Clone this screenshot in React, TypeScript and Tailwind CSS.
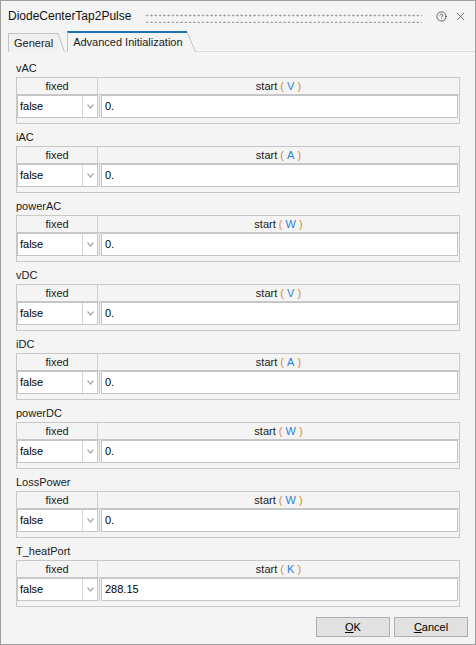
import React from 'react';
import { CircleHelp, X } from 'lucide-react';

interface Param {
  name: string;
  unit: string;
  value: string;
}

const params: Param[] = [
  { name: 'vAC', unit: 'V', value: '0.' },
  { name: 'iAC', unit: 'A', value: '0.' },
  { name: 'powerAC', unit: 'W', value: '0.' },
  { name: 'vDC', unit: 'V', value: '0.' },
  { name: 'iDC', unit: 'A', value: '0.' },
  { name: 'powerDC', unit: 'W', value: '0.' },
  { name: 'LossPower', unit: 'W', value: '0.' },
  { name: 'T_heatPort', unit: 'K', value: '288.15' },
];

const font = "font-['Liberation_Sans',Arial,sans-serif]";

const Chevron = () => (
  <svg width="7" height="5" viewBox="0 0 7 5" className="text-[#a8a8a8]">
    <path d="M0.5 0.5 L3.5 4 L6.5 0.5" fill="none" stroke="currentColor" strokeWidth="1.2" />
  </svg>
);

const ParamSection: React.FC<{ param: Param }> = ({ param }) => (
  <div className="h-[69px] flex flex-col">
    <div className="h-[18px] flex items-center text-[11px] text-[#1a1a1a] leading-none">{param.name}</div>
    <div className="h-[47px] border border-[#c8c8c8] flex flex-col">
      <div className="h-[17px] flex border-b border-[#c8c8c8] text-[11px] text-[#1a1a1a]">
        <div className="w-[81px] flex items-center justify-center border-r border-[#d0d0d0]">fixed</div>
        <div className="flex-1 flex items-center justify-center">
          start&nbsp;<span className="text-[#e08a1e]">(</span>
          <span className="text-[#2a7fd4]">&nbsp;{param.unit}&nbsp;</span>
          <span className="text-[#e08a1e]">)</span>
        </div>
      </div>
      <div className="h-[23px] flex pr-[1px]">
        <div className="w-[81px] flex border border-[#c4c4c4] bg-white">
          <div className="flex-1 flex items-center pl-[2px] text-[11px] text-black">false</div>
          <div className="w-[15px] border-l border-[#d4d4d4] flex items-center justify-center">
            <Chevron />
          </div>
        </div>
        <div className="w-[1px] bg-[#c8c8c8] mx-[1px]" />
        <div className="flex-1 border border-[#c4c4c4] bg-white flex items-center pl-[3px] text-[11px] text-black">
          {param.value}
        </div>
      </div>
    </div>
  </div>
);

export default function App() {
  return (
    <div className={`${font} w-[476px] h-[645px] bg-[#f4f4f4] border border-[#a0a0a0] flex flex-col select-none`}>
      <div className="h-[30px] flex items-center pl-[7px] pr-[8px]">
        <span className="text-[12px] text-[#111] whitespace-nowrap">DiodeCenterTap2Pulse</span>
        <div className="flex-1 mx-[14px] h-[11px] mt-[3px] bg-[radial-gradient(circle,#a0a0a0_0.9px,transparent_1.1px)] bg-[length:4.3px_7px]" />
        <CircleHelp size={11} strokeWidth={1.6} className="text-[#333] mr-[7px]" />
        <X size={13} strokeWidth={1.2} className="text-[#333]" />
      </div>
      <div className="h-[21px] flex items-end pl-[7px]">
        <div className="h-[19px] flex items-end mr-[2px]">
          <div className="h-[19px] px-[5px] flex items-center border-t border-l border-[#c4c4c4] bg-[#f0f0f0] text-[11px] text-[#1a1a1a]">
            General
          </div>
          <svg width="7" height="19" viewBox="0 0 7 19" className="block">
            <path d="M0 0.5 L6.5 19" stroke="#c4c4c4" fill="none" />
          </svg>
        </div>
        <div className="h-[21px] flex items-end">
          <div className="h-[21px] pl-[5px] pr-[4px] flex items-center border-t-2 border-l border-t-[#1a73b4] border-l-[#c4c4c4] bg-[#f4f4f4] text-[11px] text-[#1a1a1a]">
            Advanced Initialization
          </div>
          <svg width="9" height="21" viewBox="0 0 9 21" className="block">
            <path d="M0 1 L8.5 21" stroke="#c4c4c4" fill="none" />
          </svg>
        </div>
        <div className="flex-1 border-b border-[#dcdcdc]" />
      </div>
      <div className="flex-1 flex flex-col px-[15px] pt-[7px]">
        {params.map((p) => (
          <ParamSection key={p.name} param={p} />
        ))}
      </div>
      <div className="h-[20px] flex justify-end gap-[4px] pr-[7px] mb-[7px]">
        <button className="w-[74px] h-[20px] bg-[#e1e1e1] border border-[#adadad] text-[11px] text-black">
          <span className="underline">O</span>K
        </button>
        <button className="w-[74px] h-[20px] bg-[#e1e1e1] border border-[#adadad] text-[11px] text-black">
          <span className="underline">C</span>ancel
        </button>
      </div>
    </div>
  );
}
